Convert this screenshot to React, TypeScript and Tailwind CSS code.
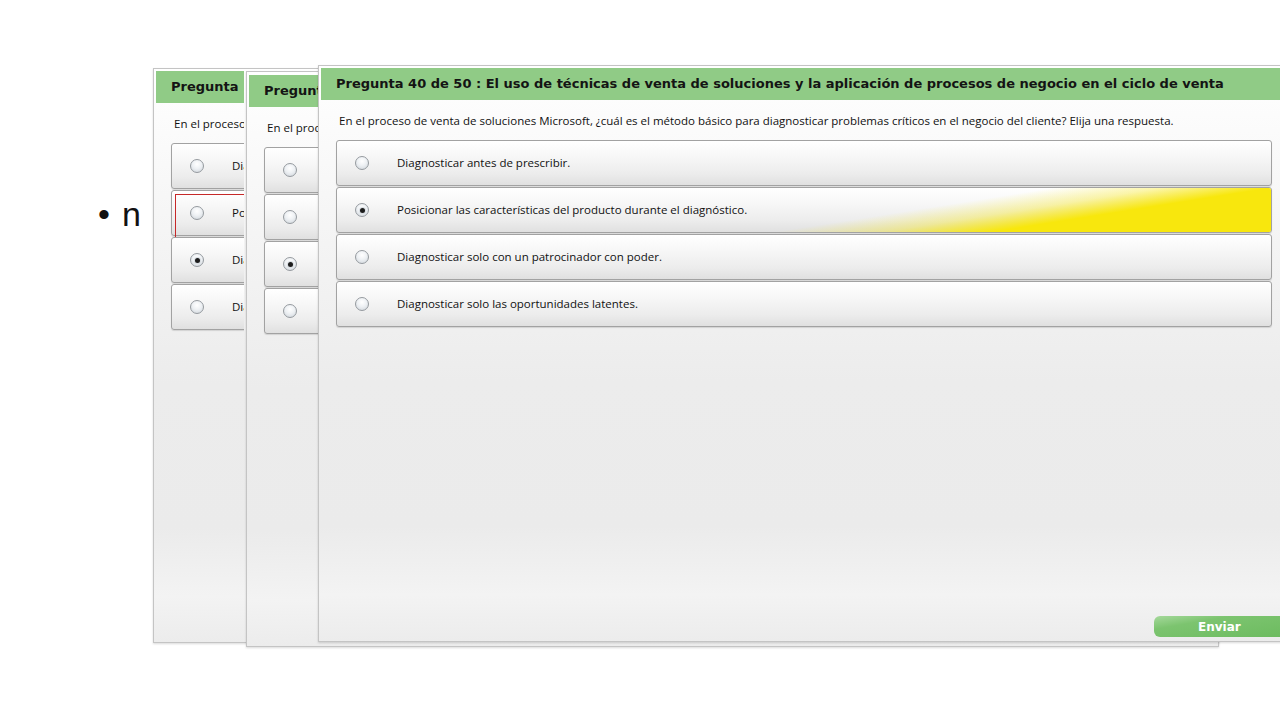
import React from 'react';

const options = [
  'Diagnosticar antes de prescribir.',
  'Posicionar las características del producto durante el diagnóstico.',
  'Diagnosticar solo con un patrocinador con poder.',
  'Diagnosticar solo las oportunidades latentes.',
];

const question =
  'En el proceso de venta de soluciones Microsoft, ¿cuál es el método básico para diagnosticar problemas críticos en el negocio del cliente? Elija una respuesta.';

function Radio({ checked }: { checked: boolean }) {
  return (
    <span className="relative flex h-[14px] w-[14px] shrink-0 items-center justify-center rounded-full border border-[#959a9f] bg-[radial-gradient(circle_at_50%_35%,#ffffff_0%,#eef1f4_45%,#cdd3d9_100%)]">
      {checked && <span className="h-[5px] w-[5px] rounded-full bg-[#1c1c1c] shadow-[0_0_0_1px_#d8dde2]" />}
    </span>
  );
}

function Option({
  text,
  checked,
  highlight,
  marked,
}: {
  text: string;
  checked: boolean;
  highlight?: boolean;
  marked?: boolean;
}) {
  return (
    <div className="relative flex h-[46px] min-w-[300px] items-center rounded-[3px] border border-[#a2a2a2] bg-[linear-gradient(to_bottom,#ffffff_0%,#f7f7f7_35%,#ececec_75%,#e0e0e0_100%)] pl-[18px] shadow-[0_1px_1px_rgba(0,0,0,0.12)]">
      {highlight && (
        <div className="absolute inset-0 rounded-[2px] bg-[linear-gradient(171deg,rgba(248,231,13,0)_59%,rgba(248,231,13,0.35)_68%,#f8e70d_77%,#f8e70d_100%)]" />
      )}
      <Radio checked={checked} />
      {text && (
        <span className="relative ml-[28px] whitespace-nowrap text-[11.5px] leading-none text-[#111] [font-family:'Open_Sans',sans-serif]">
          {text}
        </span>
      )}
      {marked && (
        <div className="absolute left-[3px] top-[3px] h-[47px] w-[400px] border border-[#c62828]" />
      )}
    </div>
  );
}

function QuizWindow({
  className,
  title,
  subtitle,
  answers,
  checked,
  highlight,
  marked,
  button,
  clip,
}: {
  className: string;
  title: string;
  subtitle: string;
  answers: string[];
  checked: number;
  highlight?: boolean;
  marked?: boolean;
  button?: boolean;
  clip?: string;
}) {
  return (
    <div
      className={`absolute flex flex-col border border-[#c4c4c4] bg-[linear-gradient(to_bottom,#ffffff_0%,#f6f6f6_25%,#ececec_55%,#ebebeb_80%,#f3f3f3_92%,#ececec_100%)] p-[2px] shadow-[0_1px_2px_rgba(0,0,0,0.15)] ${className}`}
    >
      <div className={`flex min-h-0 flex-1 flex-col overflow-hidden ${clip ?? ''}`}>
        <div className="flex h-[32px] shrink-0 items-center bg-[#90cb86] pl-[15px] text-[13px] font-bold whitespace-nowrap text-[#141414] [font-family:'DejaVu_Sans',Verdana,sans-serif]">
          {title}
        </div>
        <div className="h-[40px] shrink-0 pl-[18px] pt-[13px] text-[11.5px] leading-[16px] whitespace-nowrap text-[#111] [font-family:'Open_Sans',sans-serif]">
          {subtitle}
        </div>
        <div className="flex w-max min-w-full flex-col gap-[1px] pl-[15px] pr-[18px]">
          {answers.map((text, i) => (
            <Option
              key={i}
              text={text}
              checked={i === checked}
              highlight={highlight && i === 1}
              marked={marked && i === 1}
            />
          ))}
        </div>
        <div className="flex-1" />
        {button && (
          <div className="flex justify-end pb-[2px]">
            <div className="flex h-[21px] w-[136px] items-center rounded-l-[6px] bg-[linear-gradient(170deg,#a6d99c_0%,#7cc46f_30%,#6cbb5f_100%)] pl-[44px] text-[12px] font-bold text-white [font-family:'DejaVu_Sans',Verdana,sans-serif]">
              Enviar
            </div>
          </div>
        )}
      </div>
    </div>
  );
}

export default function App() {
  return (
    <div className="relative h-[720px] w-[1280px] overflow-hidden bg-white">
      <div className="absolute left-[98px] top-[197px] flex items-baseline gap-[12px] text-[34px] leading-none text-[#111] [font-family:'Liberation_Sans',Arial,sans-serif]">
        <span>•</span>
        <span>n</span>
      </div>

      <QuizWindow
        className="left-[153px] top-[68px] h-[575px] w-[1066px]"
        clip="w-[88px]"
        title="Pregunta"
        subtitle="En el proceso"
        answers={['Dia', 'Po', 'Dia', 'Dia']}
        checked={2}
        marked
      />
      <QuizWindow
        className="left-[246px] top-[71px] h-[576px] w-[973px] pt-[3px]"
        clip="w-[70px]"
        title="Pregunta"
        subtitle="En el proc"
        answers={['', '', '', '']}
        checked={2}
      />
      <QuizWindow
        className="left-[318px] top-[65px] h-[577px] w-[975px]"
        title="Pregunta 40 de 50 : El uso de técnicas de venta de soluciones y la aplicación de procesos de negocio en el ciclo de venta"
        subtitle={question}
        answers={options}
        checked={1}
        highlight
        button
      />
    </div>
  );
}
